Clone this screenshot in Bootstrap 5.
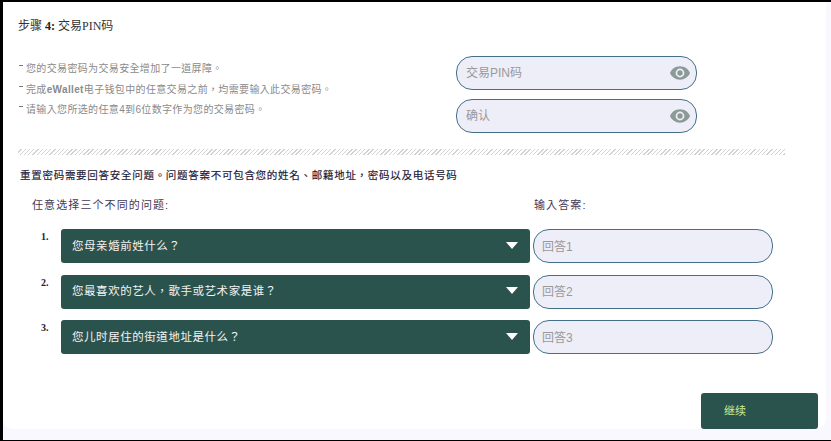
<!DOCTYPE html>
<html lang="zh-Hant">
<head>
<meta charset="utf-8">
<link href="https://cdn.jsdelivr.net/npm/bootstrap@5.3.0/dist/css/bootstrap.min.css" rel="stylesheet">
<style>
html,body{height:100%;margin:0}
body{background:#f8f8fe;font-family:"Liberation Sans","Noto Sans CJK TC",sans-serif;overflow:hidden}
.frame{width:831px;height:441px;border:solid #000;border-width:2px 0 1px 3px;overflow:hidden;display:flex;flex-direction:column}
.sheet{width:823px;height:427px;background:#fff;border-radius:0 0 10px 10px;padding:0 0 0 15px;position:relative;flex:none}
.step-title{font-family:"Liberation Serif","Noto Sans CJK TC",serif;font-size:12px;color:#333;line-height:14px;padding-top:17px;height:30px}
.step-title b{color:#222}
.upper{display:flex;height:91px;margin-top:24px}
.notes{width:438px;flex:none;padding-left:1px;padding-top:3px;font-size:10px;color:#8a8a8a;letter-spacing:.35px}
.notes div{height:20.500px;line-height:20px}
.notes i{display:inline-block;width:4px;height:1px;background:#777;margin-right:3px;vertical-align:6px}
.pins{display:flex;flex-direction:column;gap:8.500px}
.pill{background:#eeeef8;border:1px solid #45708a;border-radius:16px;height:34px;display:flex;align-items:center;padding:0 6px 0 9px;font-size:12px;color:#999;flex:none}
.pin-pill{width:241px;justify-content:space-between}
.hatch{width:767px;height:6px;margin-top:2px;background:repeating-linear-gradient(135deg,#fff 0,#fff 2px,#d2d2d2 2px,#d2d2d2 3px)}
.warn{font-size:10.500px;color:#201535;letter-spacing:.72px;margin:13px 0 0 2px;line-height:14px;-webkit-text-stroke:.15px #201535;white-space:nowrap}
.labels{display:flex;font-size:11px;color:#453a55;letter-spacing:1.100px;line-height:14px;margin-top:16px}
.labels .q-head{width:516px;padding-left:14px}
.qa-rows{display:flex;flex-direction:column;gap:11.500px;margin-top:17px}
.qa{display:flex;height:34px;align-items:stretch}
.num{width:43px;font-family:"Liberation Serif",serif;font-weight:700;font-size:10px;color:#222;padding-left:23px;padding-top:2px;line-height:12px;flex:none}
.pick{width:469px;background:#2b534e;color:#f2f2f2;border-radius:3px;display:flex;align-items:center;justify-content:space-between;padding:1px 12px 0 11px;font-size:11.500px;letter-spacing:.55px;flex:none}
.arrow{width:0;height:0;border:solid transparent;border-width:7px 6px 0;border-top-color:#fff;margin-bottom:3px}
.ans-pill{width:240px;margin-left:3px;padding:1px 0 0 8px}
.go{position:absolute;left:698px;top:391px;width:117px;height:36px;background:#2b534e;color:#c9ec90;border:0;border-radius:3px;font-size:11px;text-align:left;padding:1px 0 0 23px}
</style>
</head>
<body>
<div class="frame">
<div class="sheet">
  <div class="step-title">步骤 <b>4:</b> 交易PIN码</div>
  <div class="upper">
    <div class="notes">
      <div><i></i>您的交易密码为交易安全增加了一道屏障。</div>
      <div><i></i>完成<b>eWallet</b>电子钱包中的任意交易之前，均需要输入此交易密码。</div>
      <div><i></i>请输入您所选的任意4到6位数字作为您的交易密码。</div>
    </div>
    <div class="pins">
      <div class="pill pin-pill"><span>交易PIN码</span>
        <svg width="20" height="14" viewBox="0 0 24 16" fill="#8b9a96"><path d="M12 0C6.500 0 2 3.300 0 8c2 4.700 6.500 8 12 8s10-3.300 12-8c-2-4.700-6.500-8-12-8zm0 13.300A5.300 5.300 0 1 1 12 2.700a5.300 5.300 0 0 1 0 10.600zM12 4.800a3.200 3.200 0 1 0 0 6.400 3.200 3.200 0 0 0 0-6.400z"/></svg>
      </div>
      <div class="pill pin-pill"><span>确认</span>
        <svg width="20" height="14" viewBox="0 0 24 16" fill="#8b9a96"><path d="M12 0C6.500 0 2 3.300 0 8c2 4.700 6.500 8 12 8s10-3.300 12-8c-2-4.700-6.500-8-12-8zm0 13.300A5.300 5.300 0 1 1 12 2.700a5.300 5.300 0 0 1 0 10.600zM12 4.800a3.200 3.200 0 1 0 0 6.400 3.200 3.200 0 0 0 0-6.400z"/></svg>
      </div>
    </div>
  </div>
  <div class="hatch"></div>
  <div class="warn">重置密码需要回答安全问题。问题答案不可包含您的姓名、邮籍地址，密码以及电话号码</div>
  <div class="labels"><div class="q-head">任意选择三个不同的问题:</div><div>输入答案:</div></div>
  <div class="qa-rows">
    <div class="qa"><div class="num">1.</div><div class="pick"><span>您母亲婚前姓什么？</span><i class="arrow"></i></div><div class="pill ans-pill">回答1</div></div>
    <div class="qa"><div class="num">2.</div><div class="pick"><span>您最喜欢的艺人，歌手或艺术家是谁？</span><i class="arrow"></i></div><div class="pill ans-pill">回答2</div></div>
    <div class="qa"><div class="num">3.</div><div class="pick"><span>您儿时居住的街道地址是什么？</span><i class="arrow"></i></div><div class="pill ans-pill">回答3</div></div>
  </div>
  <button type="button" class="btn go">继续</button>
</div>
</div>
<script src="https://cdn.jsdelivr.net/npm/bootstrap@5.3.0/dist/js/bootstrap.bundle.min.js"></script>
</body>
</html>
